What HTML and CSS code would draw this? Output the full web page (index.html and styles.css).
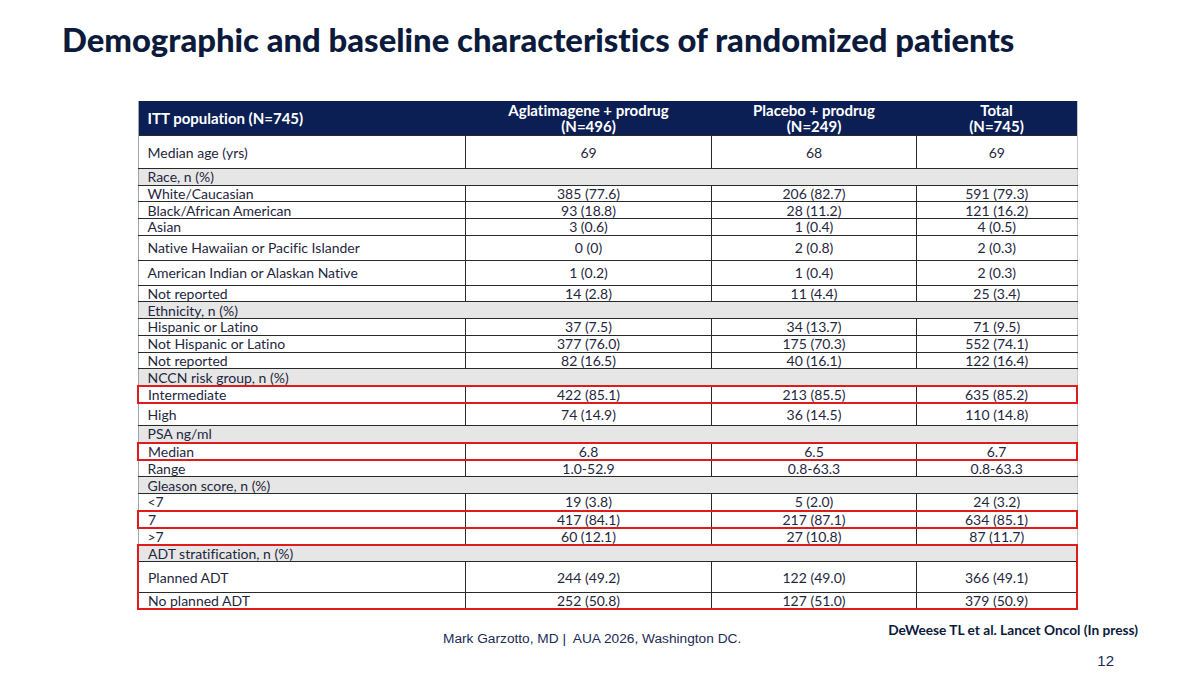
FILE: index.html
```html
<!DOCTYPE html>
<html lang="en">
<head>
  <meta charset="UTF-8" />
  <title>Demographic and baseline characteristics</title>
  <link rel="stylesheet" href="styles.css">
</head>
<body>
  <div class="slide">
    <h1>Demographic and baseline characteristics of randomized patients</h1>

    <table class="data">
      <thead>
        <tr>
          <th class="first">ITT population (N=745)</th>
          <th>Aglatimagene + prodrug<br>(N=496)</th>
          <th>Placebo + prodrug<br>(N=249)</th>
          <th>Total<br>(N=745)</th>
        </tr>
      </thead>
      <tbody>
        <tr class="tall"><td>Median age (yrs)</td><td>69</td><td>68</td><td>69</td></tr>
        <tr class="section"><td colspan="4">Race, n (%)</td></tr>
        <tr><td>White/Caucasian</td><td>385 (77.6)</td><td>206 (82.7)</td><td>591 (79.3)</td></tr>
        <tr><td>Black/African American</td><td>93 (18.8)</td><td>28 (11.2)</td><td>121 (16.2)</td></tr>
        <tr><td>Asian</td><td>3 (0.6)</td><td>1 (0.4)</td><td>4 (0.5)</td></tr>
        <tr class="mid"><td>Native Hawaiian or Pacific Islander</td><td>0 (0)</td><td>2 (0.8)</td><td>2 (0.3)</td></tr>
        <tr class="mid"><td>American Indian or Alaskan Native</td><td>1 (0.2)</td><td>1 (0.4)</td><td>2 (0.3)</td></tr>
        <tr><td>Not reported</td><td>14 (2.8)</td><td>11 (4.4)</td><td>25 (3.4)</td></tr>
        <tr class="section"><td colspan="4">Ethnicity, n (%)</td></tr>
        <tr><td>Hispanic or Latino</td><td>37 (7.5)</td><td>34 (13.7)</td><td>71 (9.5)</td></tr>
        <tr><td>Not Hispanic or Latino</td><td>377 (76.0)</td><td>175 (70.3)</td><td>552 (74.1)</td></tr>
        <tr><td>Not reported</td><td>82 (16.5)</td><td>40 (16.1)</td><td>122 (16.4)</td></tr>
        <tr class="section"><td colspan="4">NCCN risk group, n (%)</td></tr>
        <tr class="mark"><td>Intermediate</td><td>422 (85.1)</td><td>213 (85.5)</td><td>635 (85.2)</td></tr>
        <tr class="high"><td>High</td><td>74 (14.9)</td><td>36 (14.5)</td><td>110 (14.8)</td></tr>
        <tr class="section"><td colspan="4">PSA ng/ml</td></tr>
        <tr class="mark"><td>Median</td><td>6.8</td><td>6.5</td><td>6.7</td></tr>
        <tr><td>Range</td><td>1.0-52.9</td><td>0.8-63.3</td><td>0.8-63.3</td></tr>
        <tr class="section"><td colspan="4">Gleason score, n (%)</td></tr>
        <tr><td>&lt;7</td><td>19 (3.8)</td><td>5 (2.0)</td><td>24 (3.2)</td></tr>
        <tr class="mark"><td>7</td><td>417 (84.1)</td><td>217 (87.1)</td><td>634 (85.1)</td></tr>
        <tr><td>&gt;7</td><td>60 (12.1)</td><td>27 (10.8)</td><td>87 (11.7)</td></tr>
        <tr class="section mark-top"><td colspan="4">ADT stratification, n (%)</td></tr>
        <tr class="planned mark-side"><td>Planned ADT</td><td>244 (49.2)</td><td>122 (49.0)</td><td>366 (49.1)</td></tr>
        <tr class="mark-bottom"><td>No planned ADT</td><td>252 (50.8)</td><td>127 (51.0)</td><td>379 (50.9)</td></tr>
      </tbody>
    </table>

    <div class="footer">
      <div class="presenter">Mark Garzotto, MD |&nbsp; AUA 2026, Washington DC.</div>
      <div class="refs">
        <div class="cite">DeWeese TL et al. Lancet Oncol (In press)</div>
        <div class="page">12</div>
      </div>
    </div>
  </div>
</body>
</html>
```

FILE: styles.css
```css
body {
  margin: 0;
  background: #ffffff;
  font-family: "Lato", "Noto Sans", sans-serif;
  font-variant-ligatures: none;
  color: #1f2740;
}

.slide {
  width: 1200px;
  height: 675px;
  box-sizing: border-box;
  padding: 20px 0 0 0;
  overflow: hidden;
}

h1 {
  margin: 0 0 0 62px;
  font-size: 32.8px;
  font-weight: 900;
  color: #0c1a3c;
  line-height: 40px;
}

.data {
  margin: 41px 0 0 137px;
  width: 941px;
  border-collapse: collapse;
  font-size: 14px;
  line-height: 15px;
  border-left: 1px solid #9aa6b0;
  border-right: 1px solid #c8c8c8;
}

.data th {
  background: #0b1f55;
  color: #ffffff;
  font-weight: 700;
  font-size: 15px;
  line-height: 16px;
  height: 34px;
  padding: 0 9px;
  text-align: center;
  border: 0;
}

.data th:nth-child(1) { width: 309px; text-align: left; }
.data th:nth-child(2) { width: 228px; }
.data th:nth-child(3) { width: 187px; }

.data td {
  height: 15.7px;
  padding: 0 9px;
  text-align: center;
  border-top: 1px solid #2a2a2a;
  border-bottom: 1px solid #2a2a2a;
  border-left: 1px solid #2a2a2a;
  white-space: nowrap;
}

.data td:first-child {
  text-align: left;
  border-left: 1px solid #9aa6b0;
}

.data tr td:last-child {
  border-right: 1px solid #c8c8c8;
}

.data tr.tall td { height: 32px; }
.data tr.mid td { height: 24px; }
.data tr.high td { height: 21px; }
.data tr.planned td { height: 30px; }

.data tr.section td {
  background: #e6e6e6;
  text-align: left;
  border-left: 1px solid #9aa6b0;
}

/* red highlight boxes */
.data tr.mark td {
  height: 13.5px;
  border-top: 2px solid #e01b1b;
  border-bottom: 2px solid #e01b1b;
}
.data tr.mark td:first-child,
.data tr.mark-side td:first-child,
.data tr.mark-top td:first-child,
.data tr.mark-bottom td:first-child {
  border-left: 2px solid #e01b1b;
}
.data tr.mark td:last-child,
.data tr.mark-side td:last-child,
.data tr.mark-top td:last-child,
.data tr.mark-bottom td:last-child {
  border-right: 2px solid #e01b1b;
}
.data tr.mark-top td { border-top: 2px solid #e01b1b; height: 15px; }
.data tr.mark-bottom td { border-bottom: 2px solid #e01b1b; height: 15px; }

.footer {
  display: flex;
  justify-content: space-between;
  margin: 6px 0 0 443px;
  width: 695px;
}

.presenter {
  font-family: "Liberation Sans", Arial, sans-serif;
  font-size: 13.7px;
  color: #1b2a55;
  margin-top: 15px;
}

.refs {
  display: flex;
  flex-direction: column;
  align-items: flex-end;
}

.cite {
  font-weight: 700;
  font-size: 13.7px;
  color: #0c1a3c;
  margin-top: 5px;
}

.page {
  font-family: "Liberation Sans", Arial, sans-serif;
  font-size: 15px;
  color: #1b2a55;
  margin: 14px 24px 0 0;
}
```
